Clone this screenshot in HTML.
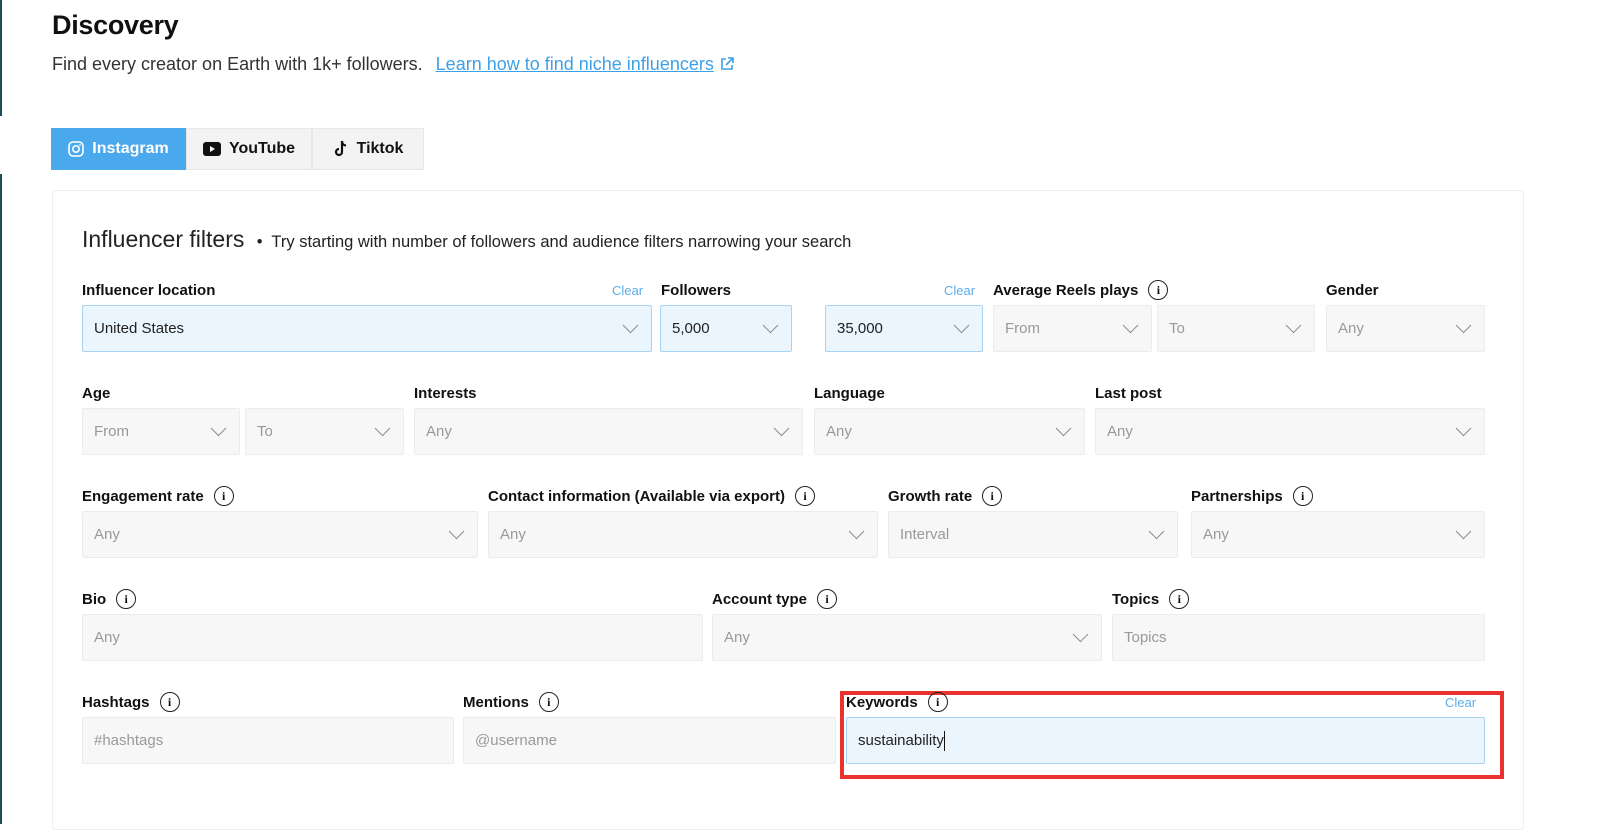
<!DOCTYPE html>
<html><head><meta charset="utf-8"><style>
*{box-sizing:border-box;margin:0;padding:0}
body{width:1600px;height:824px;overflow:hidden;background:#fff;font-family:"Liberation Sans",sans-serif;color:#111;position:relative}
.a{position:absolute}
.edge{position:absolute;left:0;width:2px;background:#1f4a5a}
h1{position:absolute;left:52px;top:10px;font-size:27px;font-weight:bold;letter-spacing:-0.3px}
.sub{position:absolute;left:52px;top:54px;font-size:18px;color:#333}
.sub a{color:#3ea0e6;margin-left:8px;text-decoration:underline}
.tab{position:absolute;top:128px;height:42px;background:#f3f3f3;border:1px solid #e8e8e8;font-size:16px;font-weight:bold;display:flex;align-items:center;justify-content:center;gap:8px;color:#111}
.card{position:absolute;left:52px;top:190px;width:1472px;height:640px;border:1px solid #eee;border-radius:4px;background:#fff}
.ft{position:absolute;left:82px;top:226px;font-size:23px;color:#222}
.ft span{font-size:16.5px;margin-left:6px}
.lb{position:absolute;font-size:15px;font-weight:bold;color:#111;display:flex;align-items:center;gap:10px;height:20px}
.i{width:20px;height:20px;border:1.5px solid #222;border-radius:50%;font-size:12px;font-weight:bold;display:flex;align-items:center;justify-content:center;font-family:"Liberation Serif",serif}
.in{position:absolute;height:47px;background:#f7f7f7;border:1px solid #ececec;border-radius:2px;font-size:15px;color:#999;padding-left:11px;display:flex;align-items:center}
.in.b{background:#eaf5fd;border-color:#a9d3f2;color:#222}
.in .c{position:absolute;right:15px;top:14px;width:11px;height:11px;border-right:1.5px solid #888;border-bottom:1.5px solid #888;transform:rotate(45deg)}
.clr{position:absolute;font-size:13px;color:#5aaee9}
</style></head><body>
<div class="edge" style="top:0;height:116px"></div>
<div class="edge" style="top:174px;height:650px"></div>
<h1>Discovery</h1>
<div class="sub">Find every creator on Earth with 1k+ followers. <a>Learn how to find niche influencers</a> <svg width="16" height="16" viewBox="0 0 16 16" style="vertical-align:-2px"><path d="M7 3H3v10h10V9M9 2h5v5M14 2L7 9" fill="none" stroke="#3ea0e6" stroke-width="1.6"/></svg></div>
<div class="tab" style="left:51px;width:135px;background:#4aa8ec;border-color:#4aa8ec;color:#fff"><svg width="16" height="16" viewBox="0 0 16 16"><rect x="1" y="1" width="14" height="14" rx="4" fill="none" stroke="#fff" stroke-width="1.6"/><circle cx="8" cy="8" r="3.2" fill="none" stroke="#fff" stroke-width="1.6"/><circle cx="12" cy="4" r="0.9" fill="#fff"/></svg>Instagram</div>
<div class="tab" style="left:186px;width:126px"><svg width="18" height="14" viewBox="0 0 18 14"><rect width="18" height="14" rx="3" fill="#111"/><path d="M7 4l5 3-5 3z" fill="#fff"/></svg>YouTube</div>
<div class="tab" style="left:312px;width:112px"><svg width="16" height="18" viewBox="0 0 16 18"><path d="M9 1v11a3 3 0 1 1-3-3M9 1c0 3 2 4.5 4 4.5" fill="none" stroke="#111" stroke-width="2.2"/></svg>Tiktok</div>
<div class="card"></div>
<div class="ft">Influencer filters <span>•&nbsp; Try starting with number of followers and audience filters narrowing your search</span></div>

<div class="lb" style="left:82px;top:280px">Influencer location</div><div class="clr" style="left:612px;top:283px">Clear</div>
<div class="lb" style="left:661px;top:280px">Followers</div><div class="clr" style="left:944px;top:283px">Clear</div>
<div class="lb" style="left:993px;top:280px">Average Reels plays <span class="i">i</span></div>
<div class="lb" style="left:1326px;top:280px">Gender</div>
<div class="in b" style="left:82px;top:305px;width:570px">United States<i class="c"></i></div>
<div class="in b" style="left:660px;top:305px;width:132px">5,000<i class="c"></i></div>
<div class="in b" style="left:825px;top:305px;width:158px">35,000<i class="c"></i></div>
<div class="in" style="left:993px;top:305px;width:159px">From<i class="c"></i></div>
<div class="in" style="left:1157px;top:305px;width:158px">To<i class="c"></i></div>
<div class="in" style="left:1326px;top:305px;width:159px">Any<i class="c"></i></div>

<div class="lb" style="left:82px;top:383px">Age</div>
<div class="lb" style="left:414px;top:383px">Interests</div>
<div class="lb" style="left:814px;top:383px">Language</div>
<div class="lb" style="left:1095px;top:383px">Last post</div>
<div class="in" style="left:82px;top:408px;width:158px">From<i class="c"></i></div>
<div class="in" style="left:245px;top:408px;width:159px">To<i class="c"></i></div>
<div class="in" style="left:414px;top:408px;width:389px">Any<i class="c"></i></div>
<div class="in" style="left:814px;top:408px;width:271px">Any<i class="c"></i></div>
<div class="in" style="left:1095px;top:408px;width:390px">Any<i class="c"></i></div>

<div class="lb" style="left:82px;top:486px">Engagement rate <span class="i">i</span></div>
<div class="lb" style="left:488px;top:486px">Contact information (Available via export) <span class="i">i</span></div>
<div class="lb" style="left:888px;top:486px">Growth rate <span class="i">i</span></div>
<div class="lb" style="left:1191px;top:486px">Partnerships <span class="i">i</span></div>
<div class="in" style="left:82px;top:511px;width:396px">Any<i class="c"></i></div>
<div class="in" style="left:488px;top:511px;width:390px">Any<i class="c"></i></div>
<div class="in" style="left:888px;top:511px;width:290px">Interval<i class="c"></i></div>
<div class="in" style="left:1191px;top:511px;width:294px">Any<i class="c"></i></div>

<div class="lb" style="left:82px;top:589px">Bio <span class="i">i</span></div>
<div class="lb" style="left:712px;top:589px">Account type <span class="i">i</span></div>
<div class="lb" style="left:1112px;top:589px">Topics <span class="i">i</span></div>
<div class="in" style="left:82px;top:614px;width:621px">Any</div>
<div class="in" style="left:712px;top:614px;width:390px">Any<i class="c"></i></div>
<div class="in" style="left:1112px;top:614px;width:373px">Topics</div>

<div class="lb" style="left:82px;top:692px">Hashtags <span class="i">i</span></div>
<div class="lb" style="left:463px;top:692px">Mentions <span class="i">i</span></div>
<div class="in" style="left:82px;top:717px;width:372px">#hashtags</div>
<div class="in" style="left:463px;top:717px;width:373px">@username</div>
<div class="a" style="left:840px;top:691px;width:664px;height:88px;border:4px solid #e8332f;background:#fff"></div>
<div class="lb" style="left:846px;top:692px">Keywords <span class="i">i</span></div><div class="clr" style="left:1445px;top:695px">Clear</div>
<div class="in b" style="left:846px;top:717px;width:639px">sustainability<span style="display:inline-block;width:1px;height:20px;background:#111"></span></div>
</body></html>
